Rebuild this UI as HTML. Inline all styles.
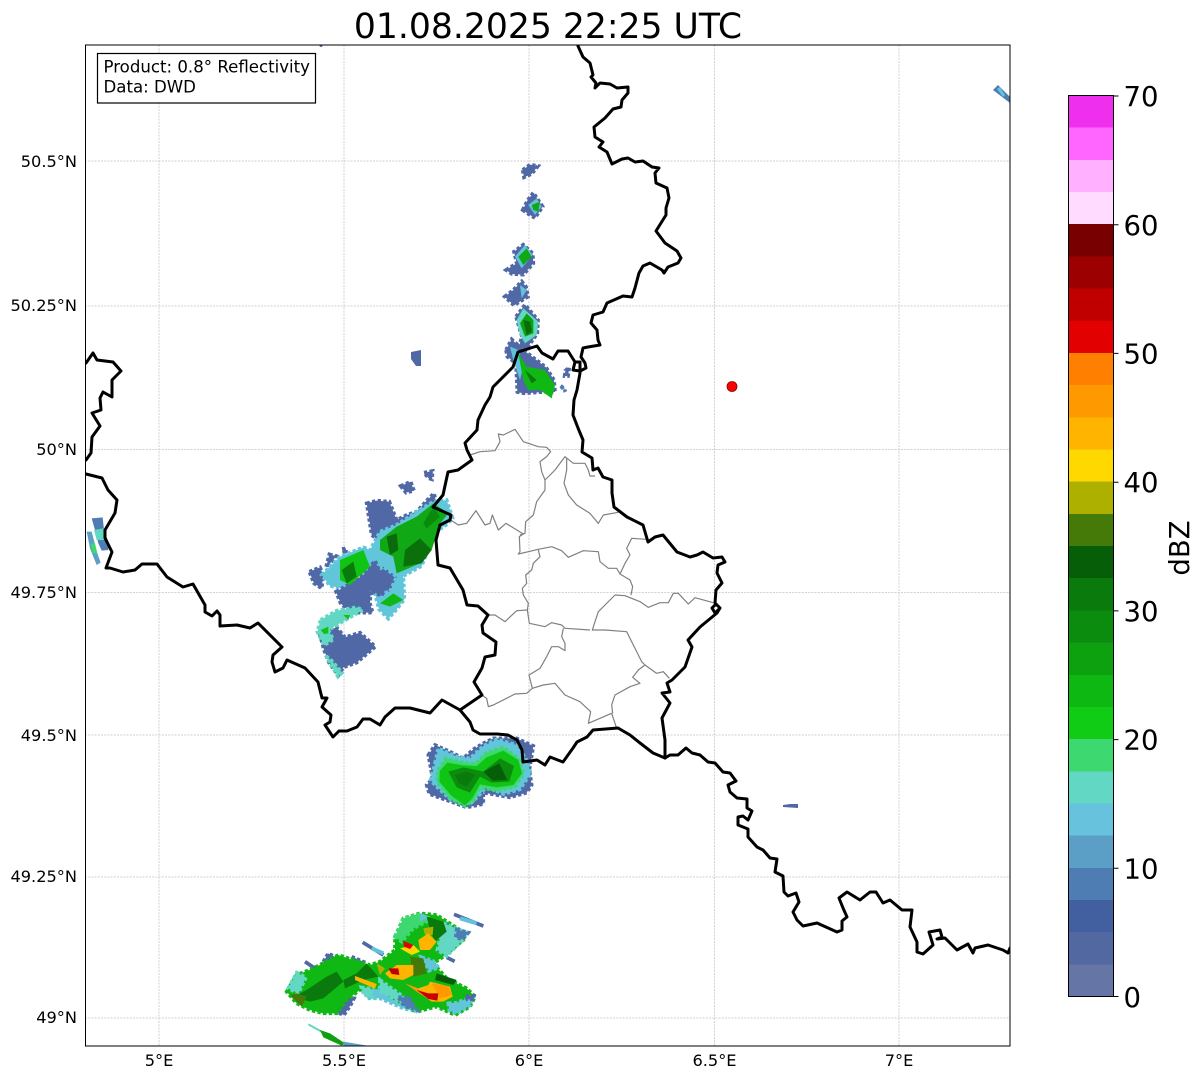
<!DOCTYPE html>
<html><head><meta charset="utf-8"><style>
html,body{margin:0;padding:0;background:#fff;width:1202px;height:1081px;overflow:hidden}
svg{display:block}
text{font-family:"DejaVu Sans","Liberation Sans",sans-serif;fill:#000}
.b,.t,.q,.g,.l,.u{stroke-width:11;stroke-dasharray:10 7}
.b{fill:#5068a5;stroke:#5068a5}
.u{fill:#4d7db2;stroke:#4d7db2}
.t{fill:#62c6da;stroke:#62c6da}
.q{fill:#62d8c4;stroke:#62d8c4}
.g{fill:#10b814;stroke:#10b814}
.l{fill:#3dd870;stroke:#3dd870}
</style></head><body>
<svg width="1202" height="1081" viewBox="0 0 1202 1081" xmlns="http://www.w3.org/2000/svg">
<rect width="1202" height="1081" fill="#fff"/>
<text x="548" y="38" font-size="34.6" text-anchor="middle">01.08.2025 22:25 UTC</text>

<!-- grid -->
<g stroke="#c4c4c4" stroke-width="0.8" stroke-dasharray="2 1.2" fill="none">
<path d="M159 45V1046M344 45V1046M529 45V1046M714.5 45V1046M899 45V1046"/>
<path d="M85 161H1010M85 306H1010M85 449.5H1010M85 592.5H1010M85 735H1010M85 877H1010M85 1018H1010"/>
</g>

<!-- radar -->
<defs><clipPath id="ax"><rect x="85.5" y="45" width="924.5" height="1001"/></clipPath></defs>
<g clip-path="url(#ax)">
<!-- south cluster -->
<g transform="translate(280,900) scale(.33333)">
<path d="M248 127L310 165M522 43L610 78M500 172L524 184M75 185L105 205" stroke="#5068a5" stroke-width="11" fill="none"/>
<path d="M540 55L590 70M275 145L310 160" stroke="#62c2dc" stroke-width="12" fill="none"/>
<path d="M85 373L130 398" stroke="#62d8c4" stroke-width="6" fill="none"/>
<polygon points="120,390 150,400 195,430 185,437 130,412" fill="#0da10f"/>
<polygon points="190,425 262,437 190,437" fill="#5b9fc6"/>
<polygon class="b" points="130,185 145,160 168,172 150,200"/>
<polygon class="b" points="215,170 250,185 240,200"/>
<polygon class="b" points="185,290 222,295 212,315 192,345 165,335"/>
<polygon class="t" points="250,268 300,250 350,285 412,335 370,325 300,295 262,295"/>
<polygon class="g" points="20,275 50,225 100,205 175,165 220,180 270,195 300,185 345,150 345,110 370,55 420,40 470,45 540,90 550,120 490,170 460,190 500,235 560,265 585,290 570,320 525,345 470,320 410,335 350,300 300,262 250,262 200,300 170,340 130,340 90,330 50,310"/>
<polygon class="q" points="25,265 50,218 78,232 55,280"/>
<polygon class="l" points="345,110 370,55 420,42 450,60 400,85 365,125"/>
<polygon points="420,40 450,50 420,65" fill="#66c2dd"/>
<polygon class="q" points="490,70 540,90 562,98 548,120 500,168 472,150"/>
<polygon class="u" points="530,88 565,98 548,118 527,112"/>
<polygon class="q" points="300,240 370,290 408,332 385,322 300,272"/>
<polygon class="u" points="355,292 388,292 410,330 372,318"/>
<polygon class="t" points="425,172 458,182 476,203 447,212"/>
<polygon class="q" points="244,262 272,266 278,292 252,284"/>
<polygon class="t" points="505,310 530,308 562,296 580,292 570,316 530,340 508,332"/>
<polygon class="b" points="558,288 582,288 580,298 562,298"/>
<polygon points="40,290 80,270 140,230 170,215 190,245 130,295 90,305" fill="#0a7a0c"/>
<polygon points="190,240 230,220 260,190 295,230 250,240 195,265" fill="#0a7a0c"/>
<polygon points="440,50 490,65 500,95 465,125 450,90" fill="#0a7a0c"/>
<polygon points="390,170 430,175 440,220 400,230" fill="#457a08"/>
<polygon points="470,220 530,240 520,255 465,240" fill="#065e08"/>
<polygon points="50,280 80,290 65,320 30,285" fill="#457a08"/>
<polygon points="430,85 460,80 458,105 435,105" fill="#aeb000"/>
<polygon points="225,228 290,252 285,266 225,240" fill="#ffb400"/>
<polygon points="290,190 315,205 300,225" fill="#aeb000"/>
<polygon points="315,220 350,195 400,195 400,225 370,240 330,235" fill="#ffb400"/>
<polygon points="415,120 445,100 470,125 450,150 420,150" fill="#ffb400"/>
<polygon points="360,145 400,135 420,155 395,165" fill="#ffd800"/>
<polygon points="375,250 440,275 425,285" fill="#ff9900"/>
<polygon points="415,265 445,255 450,245 510,260 518,290 490,305 455,305 420,280" fill="#ffb400"/>
<polygon points="455,250 505,258 515,285 480,295" fill="#ff9900"/>
<polygon points="325,205 355,205 358,225 335,222" fill="#c00000"/>
<polygon points="370,123 400,135 390,147 372,140" fill="#e20000"/>
<polygon points="410,270 445,280 475,280 472,302 445,297" fill="#c80000"/>
</g>

<!-- middle cluster -->
<g transform="translate(420,730) scale(.33333)">
<polygon class="b" points="25,75 45,45 90,65 130,85 160,58 190,40 220,25 290,25 340,48 328,120 335,165 320,188 270,202 190,188 190,222 140,232 70,207 28,192 20,165 38,145"/>
<polygon class="t" points="45,100 55,55 110,80 150,85 190,48 230,28 290,45 320,90 332,130 300,178 250,192 200,170 175,198 150,222 90,207 45,165 32,150"/>
<polygon class="l" points="55,120 78,85 130,98 165,102 200,68 250,52 295,85 310,130 285,170 230,182 180,172 160,212 135,228 90,205 52,155"/>
<polygon points="60,122 82,98 130,106 170,108 200,82 250,62 295,90 306,130 280,165 230,172 180,163 157,205 135,226 95,198 58,155" fill="#10c414"/>
<polygon points="85,125 130,112 178,122 190,125 240,85 282,108 268,155 215,158 180,140 150,188 110,172" fill="#0b8c0f"/>
<polygon points="190,125 238,100 262,150 218,152" fill="#065e08"/>
<polygon points="105,135 140,125 165,135 140,170 118,160" fill="#0a7a0c"/>
</g>

<!-- NW cluster -->
<g transform="translate(300,460) scale(.33333)">
<polygon class="b" points="200,130 230,122 268,125 290,180 320,165 350,155 380,122 402,100 408,125 350,180 300,225 240,245 215,225"/>
<polygon class="b" points="28,335 60,322 70,345 65,385 42,370"/>
<polygon class="b" points="302,78 332,65 342,92 318,98"/>
<polygon class="b" points="372,38 398,33 396,58 386,55"/>
<polygon class="b" points="88,283 108,288 100,300 78,322"/>
<polygon class="b" points="126,267 138,265 138,283"/>
<polygon class="b" points="200,350 250,320 290,350 270,395 230,395 215,400"/>
<polygon class="t" points="65,345 120,290 190,262 210,270 240,215 290,195 350,155 400,125 440,120 458,175 438,195 408,215 388,260 365,318 310,348 313,418 290,448 265,476 237,448 225,402 270,395 290,350 250,320 200,350 180,330 130,385 90,378"/>
<polygon class="b" points="108,395 150,372 195,340 225,302 258,380 245,408 212,392 210,430 218,458 152,458 122,430"/>
<polygon class="b" points="58,518 110,502 135,532 180,518 226,560 170,608 130,622 115,646 88,610 72,570"/>
<polygon class="q" points="62,480 110,452 168,442 188,450 140,478 85,510 100,538 72,556 52,515"/>
<polygon class="q" points="78,588 95,602 126,638 114,650"/>
<polygon points="120,300 190,270 210,320 150,375 120,360" fill="#10c414"/>
<polygon points="240,240 290,200 350,170 400,130 445,160 420,190 395,270 360,310 290,340 280,290 240,270" fill="#10a814"/>
<polygon points="240,430 280,400 310,420 270,440" fill="#10b814"/>
<polygon points="62,510 85,500 85,520 72,522" fill="#10c414"/>
<polygon points="130,465 150,465 145,480" fill="#10c414"/>
<polygon points="125,330 160,305 170,350 140,370" fill="#0a7a0c"/>
<polygon points="260,230 290,220 295,270 270,285" fill="#0a6a0c"/>
<polygon points="315,270 360,235 395,270 365,310 310,320" fill="#0a700c"/>
<polygon points="370,190 400,140 420,170 380,205" fill="#0a8a0c"/>
</g>

<!-- north chain -->
<g transform="translate(490,150) scale(.33333)">
<polygon class="b" points="98,60 120,44 144,48 125,72 102,82"/>
<polygon class="b" points="98,180 112,152 130,128 158,170 135,204 115,192"/>
<polygon points="115,165 140,145 155,170 135,195" fill="#62c2dc"/>
<polygon points="125,165 150,155 145,185 130,180" fill="#10a814"/>
<polygon class="b" points="48,360 80,340 72,305 100,284 128,310 130,340 100,374 66,372"/>
<polygon points="75,320 105,285 128,315 95,355" fill="#62c2dc"/>
<polygon points="85,320 110,295 125,320 100,345" fill="#10a814"/>
<polygon class="b" points="44,440 70,420 95,394 108,410 114,440 72,466"/>
<polygon points="90,405 110,420 95,445" fill="#62c2dc"/>
<polygon class="b" points="78,500 105,464 144,510 142,550 110,596 87,588 96,560"/>
<polygon points="80,510 100,475 145,515 140,555 105,580 90,555" fill="#62d8c4"/>
<polygon points="90,520 110,490 130,510 130,550 105,560" fill="#0da10f"/>
<polygon points="100,510 120,515 125,545 110,555" fill="#0a6a0c"/>
<polygon class="b" points="48,600 65,568 100,600 168,652 192,690 195,726 160,726 100,730 82,726 78,640 52,620"/>
<polygon points="60,590 85,600 100,650 90,690 70,630" fill="#62c2dc"/>
<polygon points="85,610 110,650 165,660 195,705 185,745 150,720 115,720 100,690" fill="#10b814"/>
<polygon points="105,660 140,690 125,700" fill="#0a7a0c"/>
<polygon class="b" points="226,662 238,652 234,678 224,678"/>
<polygon class="u" points="212,707 223,716 226,725"/>
</g>

<!-- small echoes -->
<g transform="translate(80,340) scale(.33333)">
<polygon points="35,535 68,532 72,570 85,605 85,630 65,632 55,610 45,570" fill="#4d7db2"/>
<polygon points="42,570 70,565 72,600 50,600" fill="#62d8c4"/>
<polygon points="20,575 35,575 52,640 62,668 50,675 30,625" fill="#5b9fc6"/>
<polygon points="32,610 45,610 52,640 38,640" fill="#3dd870"/>
</g>
<polygon points="411,352 421,350 421,366 416,366 411,359" fill="#5068a5"/>
<polygon points="783,805 790,804 798,804 798,808 783,807" fill="#5068a5"/>
<polygon points="993,90 998,85 1010,97 1010,103" fill="#4d7db2"/>
<polygon points="997,89 1000,87 1005,95 1003,97" fill="#66c2dd"/>
<circle cx="321" cy="45.5" r="1.5" fill="#5068a5"/>

<!-- cantons -->
<g transform="translate(430,420) scale(.33333)" fill="none" stroke="#808080" stroke-width="3.6" stroke-linejoin="round">
<path d="M120 105L150 95L195 92L210 65L205 42L220 45L255 28L280 65L325 80L350 82L362 95L350 110L330 125L335 155L345 180L345 210L320 245L310 285L287 305L285 340L270 345"/>
<path d="M345 180L375 150L405 110L430 130L465 130L475 150L480 168L495 168"/>
<path d="M410 115L410 150L402 190L415 225L440 255L480 280L505 310L520 285L565 277"/>
<path d="M62 300L85 315L110 310L138 272L165 315L180 310L187 285L205 330L228 310L280 342L268 350L270 395L265 402L295 395L325 388L365 380L395 392L415 412L460 392L505 395L510 425L535 445L560 445L570 462L600 480L608 500L603 525"/>
<path d="M650 358L605 355L590 385L600 405L585 430L570 462"/>
<path d="M325 390L330 410L310 430L305 450L287 465L290 490L277 505L280 525L295 550L292 570L260 572L225 605L195 585L175 585"/>
<path d="M292 570L298 610L345 620L365 608L395 615L405 625L480 630"/>
<path d="M555 525L585 527L630 545L655 562L690 548L715 548L730 520L745 520L775 552L795 533L850 548"/>
<path d="M555 525L505 575L495 605L487 630L525 630L590 635L615 685L635 725L645 735L680 760L700 755L718 775"/>
<path d="M400 625L395 650L405 670L405 692L385 680L365 680L350 710L330 745L297 765L307 805L340 795L375 790L405 825L450 845L482 875L475 910L545 880L560 925"/>
<path d="M307 805L290 820L255 822L190 855L175 860L170 835L155 825"/>
<path d="M645 735L625 750L608 772L630 790L600 800L555 825L545 855L548 880"/>
</g>

<!-- borders -->
<g fill="none" stroke="#000" stroke-width="3" stroke-linejoin="round" stroke-linecap="round">
<path d="M578 46L583 57L590 63L593 75L591 77L596 83L595 88L600 83L610 84L617 88L628 87L628 93L622 100L621 107L613 109L605 118L594 127L595 137L603 142L599 147L607 152L612 164L622 159L628 158L635 162L643 161L652 167L659 168L655 173L656 183L667 188L669 198L666 208L666 215L656 231L665 243L677 251L681 258L678 263L668 267L664 273L662 270L650 263L643 266L639 273L635 288L632 297L623 296L607 303L603 312L593 315L591 323L597 330L598 340L600 345L588 347L583 348L581 357L585 363L586 368L580 371L573 370L575 362L580 362L580 373L577 390L574 400L573 415L578 428L583 440L582 452L592 458L593 470L598 468L603 477L612 480L612 493L614 507L627 517L643 525L648 542L655 537L663 535L677 552L690 557L697 555L703 552L713 558L722 557L725 562L718 565L717 573L722 583L716 590L715 603L720 608L715 613L712 608L716 604L720 608L717 613L700 627L688 640L692 647L685 667L672 680L667 683L670 692L662 693L670 703L662 718L665 740L665 758"/>
<path d="M665 758L670 755L678 755L686 748L692 753L700 755L708 762L715 763L723 772L730 773L736 781L728 785L730 792L737 798L747 799L747 808L752 811L748 820L743 816L738 817L738 825L748 829L748 837L757 847L763 850L770 858L777 859L775 872L783 876L784 892L788 896L796 893L799 902L793 912L797 920L803 926L817 923L837 932L842 930L842 921L847 917L843 908L839 898L847 892L860 900L870 892L876 892L883 903L890 900L902 910L912 910L910 927L917 942L917 952L923 954L933 945L929 932L940 930L942 937L937 939L945 938L957 950L968 944L973 953L975 948L988 945L1003 950L1008 953L1010 948"/>
<path d="M665 758L653 753L640 743L630 735L618 728L593 730L587 737L577 742L573 748L563 762L550 757L545 765L537 760L523 762L522 750L517 740L508 735L497 734L480 734L473 730L470 722L460 710L442 700L430 713L410 708L395 708L385 717L380 725L370 719L363 719L357 727L347 731L339 731L333 737L325 725L330 722L331 715L322 707L327 698L322 698L318 682L305 668L287 660L283 668L275 672L272 662L273 655L282 647L258 623L250 628L237 625L220 626L220 615L217 611L212 616L205 612L205 605L193 584L183 587L167 577L157 564L142 564L135 570L123 572L110 568L106 568L112 552L105 538L105 530L115 513L117 500L108 490L102 478L86 474"/>
<path d="M460 710L482 695L474 682L482 668L485 657L495 655L496 642L483 633L482 625L488 615L478 606L467 605L463 590L450 568L438 565L436 540L440 525L450 520L451 515L433 507L443 495L448 472L458 470L472 460L467 450L465 443L477 430L478 420L485 405L490 397L493 387L513 367L518 352L537 346L542 353L553 359L558 351L568 351L575 362"/>
<path d="M86 363L93 353L97 360L113 362L121 371L112 380L112 397L103 392L100 398L101 410L92 413L100 426L92 437L91 453L86 460"/>
</g>
</g>

<!-- radar site -->
<circle cx="732" cy="386.5" r="5" fill="#ff0000" stroke="#8a0000" stroke-width="0.8"/>

<!-- frame -->
<rect x="85.5" y="45" width="924.5" height="1001" fill="none" stroke="#000" stroke-width="1"/>

<!-- legend -->
<rect x="97.5" y="53.5" width="218" height="49.5" fill="#fff" stroke="#000" stroke-width="1.2"/>
<text x="103.5" y="72.5" font-size="16.6">Product: 0.8° Reflectivity</text>
<text x="103.5" y="92.5" font-size="16.6">Data: DWD</text>

<!-- axis labels -->
<g font-size="16.2" text-anchor="end">
<text x="77" y="167">50.5°N</text>
<text x="77" y="311">50.25°N</text>
<text x="77" y="455">50°N</text>
<text x="77" y="598">49.75°N</text>
<text x="77" y="741">49.5°N</text>
<text x="77" y="882">49.25°N</text>
<text x="77" y="1023">49°N</text>
</g>
<g font-size="16.2" text-anchor="middle">
<text x="159" y="1066">5°E</text>
<text x="344" y="1066">5.5°E</text>
<text x="529" y="1066">6°E</text>
<text x="714.5" y="1066">6.5°E</text>
<text x="899" y="1066">7°E</text>
</g>

<!-- colorbar -->
<g shape-rendering="crispEdges">
<rect x="1068" y="95.5" width="45" height="32.6" fill="#ee30ee"/>
<rect x="1068" y="127.7" width="45" height="32.6" fill="#ff66ff"/>
<rect x="1068" y="159.9" width="45" height="32.6" fill="#ffb0ff"/>
<rect x="1068" y="192" width="45" height="32.6" fill="#ffdcff"/>
<rect x="1068" y="224.2" width="45" height="32.6" fill="#780000"/>
<rect x="1068" y="256.4" width="45" height="32.6" fill="#9c0000"/>
<rect x="1068" y="288.6" width="45" height="32.6" fill="#c00000"/>
<rect x="1068" y="320.8" width="45" height="32.6" fill="#e20000"/>
<rect x="1068" y="353" width="45" height="32.6" fill="#ff7f00"/>
<rect x="1068" y="385.1" width="45" height="32.6" fill="#ff9900"/>
<rect x="1068" y="417.3" width="45" height="32.6" fill="#ffb400"/>
<rect x="1068" y="449.5" width="45" height="32.6" fill="#ffd800"/>
<rect x="1068" y="481.7" width="45" height="32.6" fill="#aeb000"/>
<rect x="1068" y="513.9" width="45" height="32.6" fill="#457a08"/>
<rect x="1068" y="546" width="45" height="32.6" fill="#065e08"/>
<rect x="1068" y="578.2" width="45" height="32.6" fill="#0a7a0c"/>
<rect x="1068" y="610.4" width="45" height="32.6" fill="#0b8c0f"/>
<rect x="1068" y="642.6" width="45" height="32.6" fill="#0da10f"/>
<rect x="1068" y="674.8" width="45" height="32.6" fill="#0eb812"/>
<rect x="1068" y="707" width="45" height="32.6" fill="#10cc14"/>
<rect x="1068" y="739.1" width="45" height="32.6" fill="#3dd870"/>
<rect x="1068" y="771.3" width="45" height="32.6" fill="#62d8c4"/>
<rect x="1068" y="803.5" width="45" height="32.6" fill="#66c2dd"/>
<rect x="1068" y="835.7" width="45" height="32.6" fill="#5b9fc6"/>
<rect x="1068" y="867.9" width="45" height="32.6" fill="#4d7db2"/>
<rect x="1068" y="900" width="45" height="32.6" fill="#425fa0"/>
<rect x="1068" y="932.2" width="45" height="32.6" fill="#5268a0"/>
<rect x="1068" y="964.4" width="45" height="32.1" fill="#6575a6"/>
</g>
<rect x="1068.5" y="95.5" width="45" height="901" fill="none" stroke="#000" stroke-width="1"/>
<path d="M1113.5 96H1118.5M1113.5 224.7H1118.5M1113.5 353.4H1118.5M1113.5 482.2H1118.5M1113.5 610.9H1118.5M1113.5 739.6H1118.5M1113.5 868.3H1118.5M1113.5 996.5H1118.5" stroke="#000" stroke-width="1"/>
<g font-size="27.5">
<text x="1123.5" y="106">70</text>
<text x="1123.5" y="235">60</text>
<text x="1123.5" y="363.5">50</text>
<text x="1123.5" y="492">40</text>
<text x="1123.5" y="621">30</text>
<text x="1123.5" y="749.5">20</text>
<text x="1123.5" y="878.5">10</text>
<text x="1123.5" y="1007">0</text>
</g>
<text transform="translate(1189,548) rotate(-90)" font-size="27.5" text-anchor="middle">dBZ</text>
</svg>
</body></html>
